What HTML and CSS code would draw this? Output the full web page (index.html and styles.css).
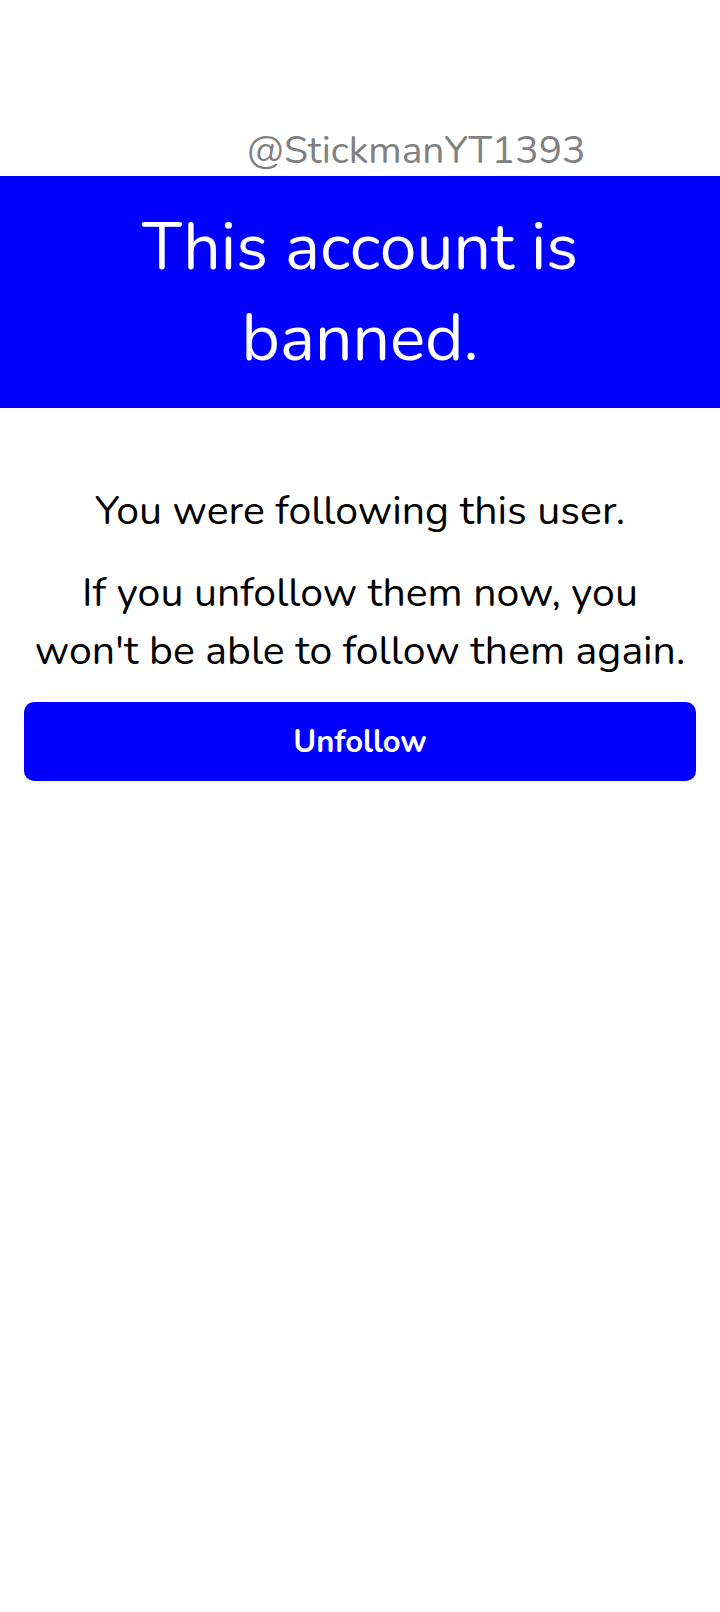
FILE: index.html
```html
<!DOCTYPE html>
<html lang="en">
<head>
    <meta charset="UTF-8">
    <meta name="viewport" content="width=device-width, initial-scale=1.0">
    <title>Banned account</title>
    <link rel="stylesheet" href="styles.css">
</head>
<body>
    <header class="profile-head">
        <span class="handle">@StickmanYT1393</span>
    </header>

    <div class="ban-banner">
        <h1>This account is banned.</h1>
    </div>

    <section class="ban-info">
        <p class="info-line">You were following this user.</p>
        <p class="info-line">If you unfollow them now, you won't be able to follow them again.</p>
        <button class="unfollow-btn" type="button">Unfollow</button>
    </section>
</body>
</html>
```

FILE: styles.css
```css
body {
    margin: 0;
    font-family: Nunito, Lato, sans-serif;
    background: #fff;
    color: #000;
}

/* en-tête avec le pseudo */
.profile-head {
    height: 176px;
    display: flex;
    align-items: flex-end;
    padding-left: 247px;
    box-sizing: border-box;
}
.handle {
    font-size: 39px;
    line-height: 50px;
    color: #808080;
}

/* bandeau bleu */
.ban-banner {
    background-color: #0000ff;
    padding: 26px 120px;
    height: 232px;
    box-sizing: border-box;
}
.ban-banner h1 {
    margin: 0;
    color: #fff;
    font-size: 66px;
    font-weight: normal;
    line-height: 91px;
    text-align: center;
}

/* texte + bouton */
.ban-info {
    padding: 74px 24px 0;
    text-align: center;
}
.info-line {
    margin: 0 0 24px;
    padding: 0 6px;
    font-size: 41px;
    line-height: 58px;
}
.unfollow-btn {
    display: block;
    width: 100%;
    height: 79px;
    margin-top: -2px;
    border: none;
    border-radius: 10px;
    background-color: #0000ff;
    color: #fff;
    font-family: inherit;
    font-size: 31px;
    font-weight: bold;
}
```
